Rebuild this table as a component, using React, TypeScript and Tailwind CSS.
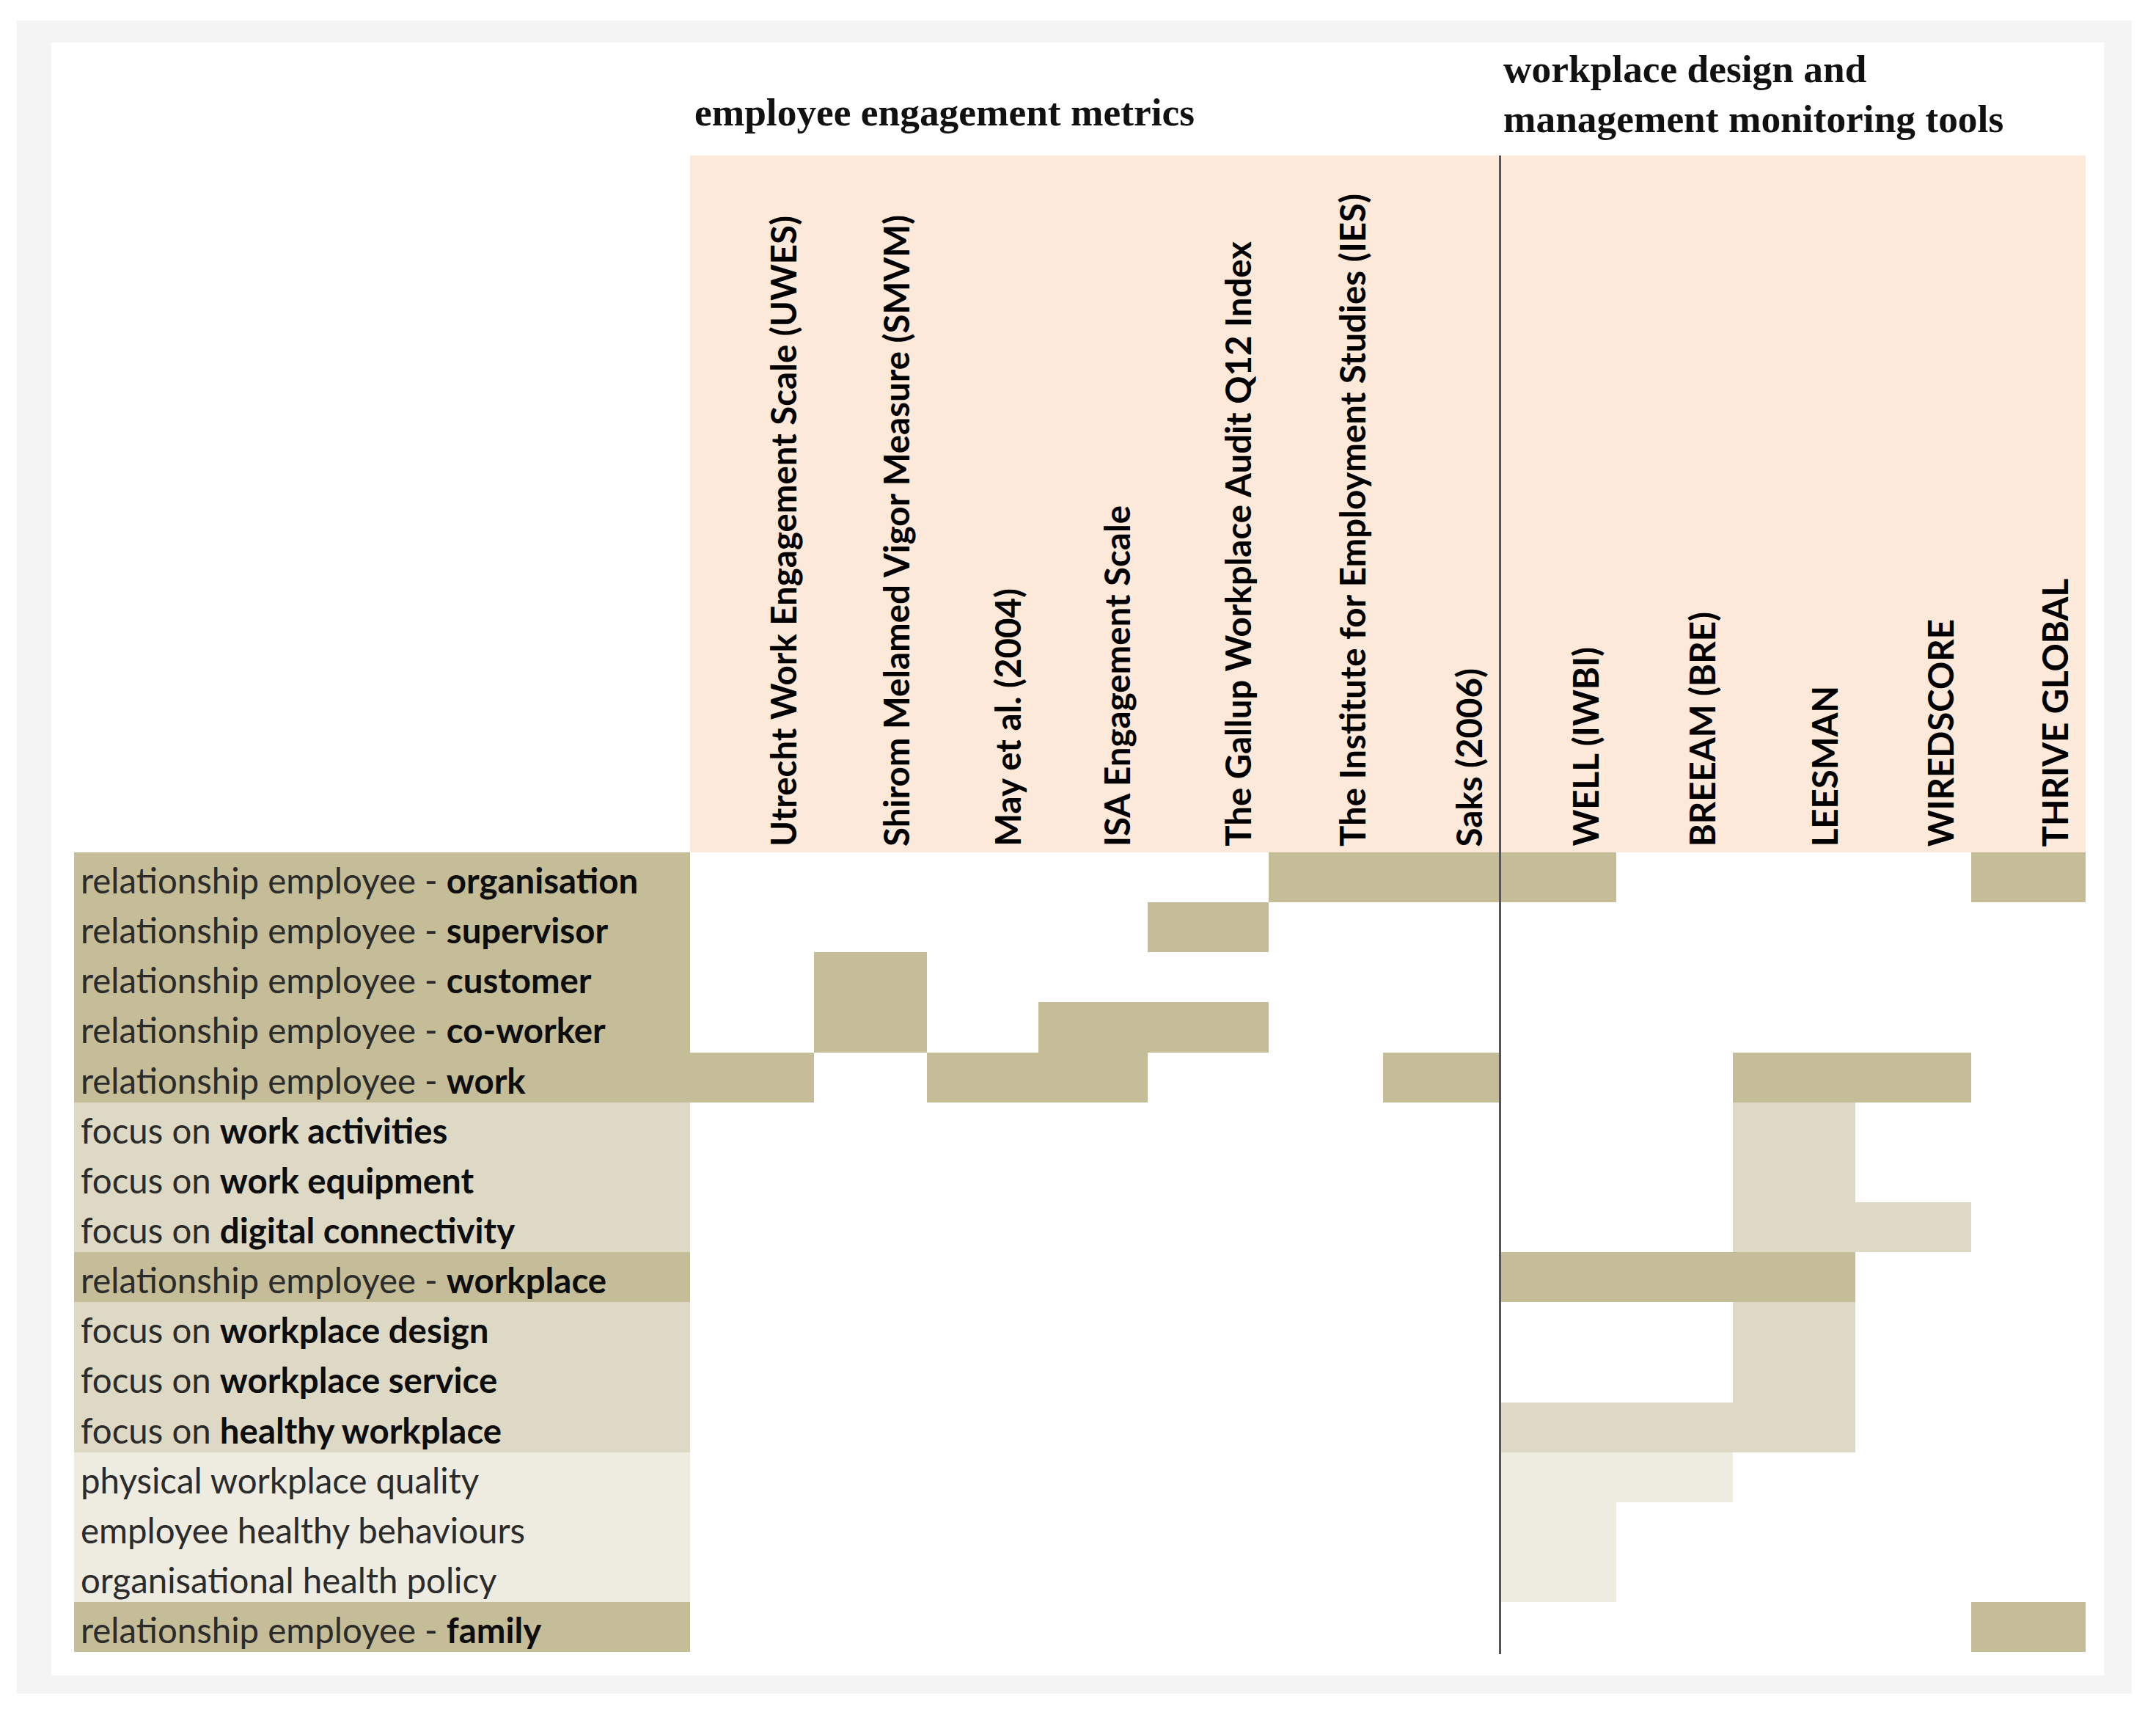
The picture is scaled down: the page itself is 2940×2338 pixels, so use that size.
import React from "react";

type Row = { pre: string; bold: string; shade: "D" | "M" | "L"; cells: string };

const headers = [
  "Utrecht Work Engagement Scale (UWES)",
  "Shirom Melamed Vigor Measure (SMVM)",
  "May et al. (2004)",
  "ISA Engagement Scale",
  "The Gallup Workplace Audit Q12 Index",
  "The Institute for Employment Studies (IES)",
  "Saks (2006)",
  "WELL (IWBI)",
  "BREEAM (BRE)",
  "LEESMAN",
  "WIREDSCORE",
  "THRIVE GLOBAL",
];

const rows: Row[] = [
  { pre: "relationship employee - ", bold: "organisation", shade: "D", cells: ".....DDD...D" },
  { pre: "relationship employee - ", bold: "supervisor", shade: "D", cells: "....D......." },
  { pre: "relationship employee - ", bold: "customer", shade: "D", cells: ".D.........." },
  { pre: "relationship employee - ", bold: "co-worker", shade: "D", cells: ".D.DD......." },
  { pre: "relationship employee - ", bold: "work", shade: "D", cells: "D.DD..D..DD." },
  { pre: "focus on ", bold: "work activities", shade: "M", cells: ".........M.." },
  { pre: "focus on ", bold: "work equipment", shade: "M", cells: ".........M.." },
  { pre: "focus on ", bold: "digital connectivity", shade: "M", cells: ".........MM." },
  { pre: "relationship employee - ", bold: "workplace", shade: "D", cells: ".......DDD.." },
  { pre: "focus on ", bold: "workplace design", shade: "M", cells: ".........M.." },
  { pre: "focus on ", bold: "workplace service", shade: "M", cells: ".........M.." },
  { pre: "focus on ", bold: "healthy workplace", shade: "M", cells: ".......MMM.." },
  { pre: "physical workplace quality", bold: "", shade: "L", cells: ".......LL..." },
  { pre: "employee healthy behaviours", bold: "", shade: "L", cells: ".......L...." },
  { pre: "organisational health policy", bold: "", shade: "L", cells: ".......L...." },
  { pre: "relationship employee - ", bold: "family", shade: "D", cells: "...........D" },
];

const shadeClass: Record<string, string> = {
  D: "bg-[#c4bd97]",
  M: "bg-[#ddd9c4]",
  L: "bg-[#eeece1]",
  ".": "bg-white",
};

export default function App() {
  return (
    <div className="min-h-screen bg-white pt-[28px] pl-[23px] [font-family:Lato,'Noto_Sans',sans-serif]">
      <div className="w-[2884px] bg-[#f4f4f4] pt-[30px] pb-[25px] pl-[47px] pr-[38px]">
        <div className="bg-white pl-[31px] pr-[25px] pb-[32px]">
          {/* titles */}
          <div className="flex h-[154px] pl-[846px] text-[53.4px] font-bold leading-[68px] text-[#111] [font-family:'Liberation_Serif',serif]">
            <div className="w-[1103px] pt-[61px]">employee engagement metrics</div>
            <div className="pt-[2px]">
              <div>workplace design and</div>
              <div>management monitoring tools</div>
            </div>
          </div>

          {/* table */}
          <div className="relative grid grid-cols-[840px_169px_154px_152px_149px_165px_156px_159px_159px_159px_167px_158px_156px] grid-rows-[950px_repeat(16,68.15px)]">
            <div className="bg-white" />
            {headers.map((h) => (
              <div key={h} className="flex items-end justify-end bg-[#fde9d9] pr-[13px] pb-[8px]">
                <span className="rotate-180 whitespace-nowrap text-[47.4px] font-bold leading-[1.2] text-black [writing-mode:vertical-rl]">
                  {h}
                </span>
              </div>
            ))}

            {rows.map((r, i) => (
              <React.Fragment key={i}>
                <div className={`${shadeClass[r.shade]} overflow-hidden whitespace-nowrap pl-[9px] pt-[7px] text-[47.4px] leading-[62px] text-[#2b2b2b]`}>
                  {r.pre}
                  {r.bold && <span className="font-bold text-[#0d0d0d]">{r.bold}</span>}
                </div>
                {r.cells.split("").map((c, j) => (
                  <div key={j} className={shadeClass[c]} />
                ))}
              </React.Fragment>
            ))}

            <div className="absolute top-0 bottom-[-3px] left-[1943px] w-[3px] bg-[#555555]" />
          </div>
        </div>
      </div>
    </div>
  );
}
